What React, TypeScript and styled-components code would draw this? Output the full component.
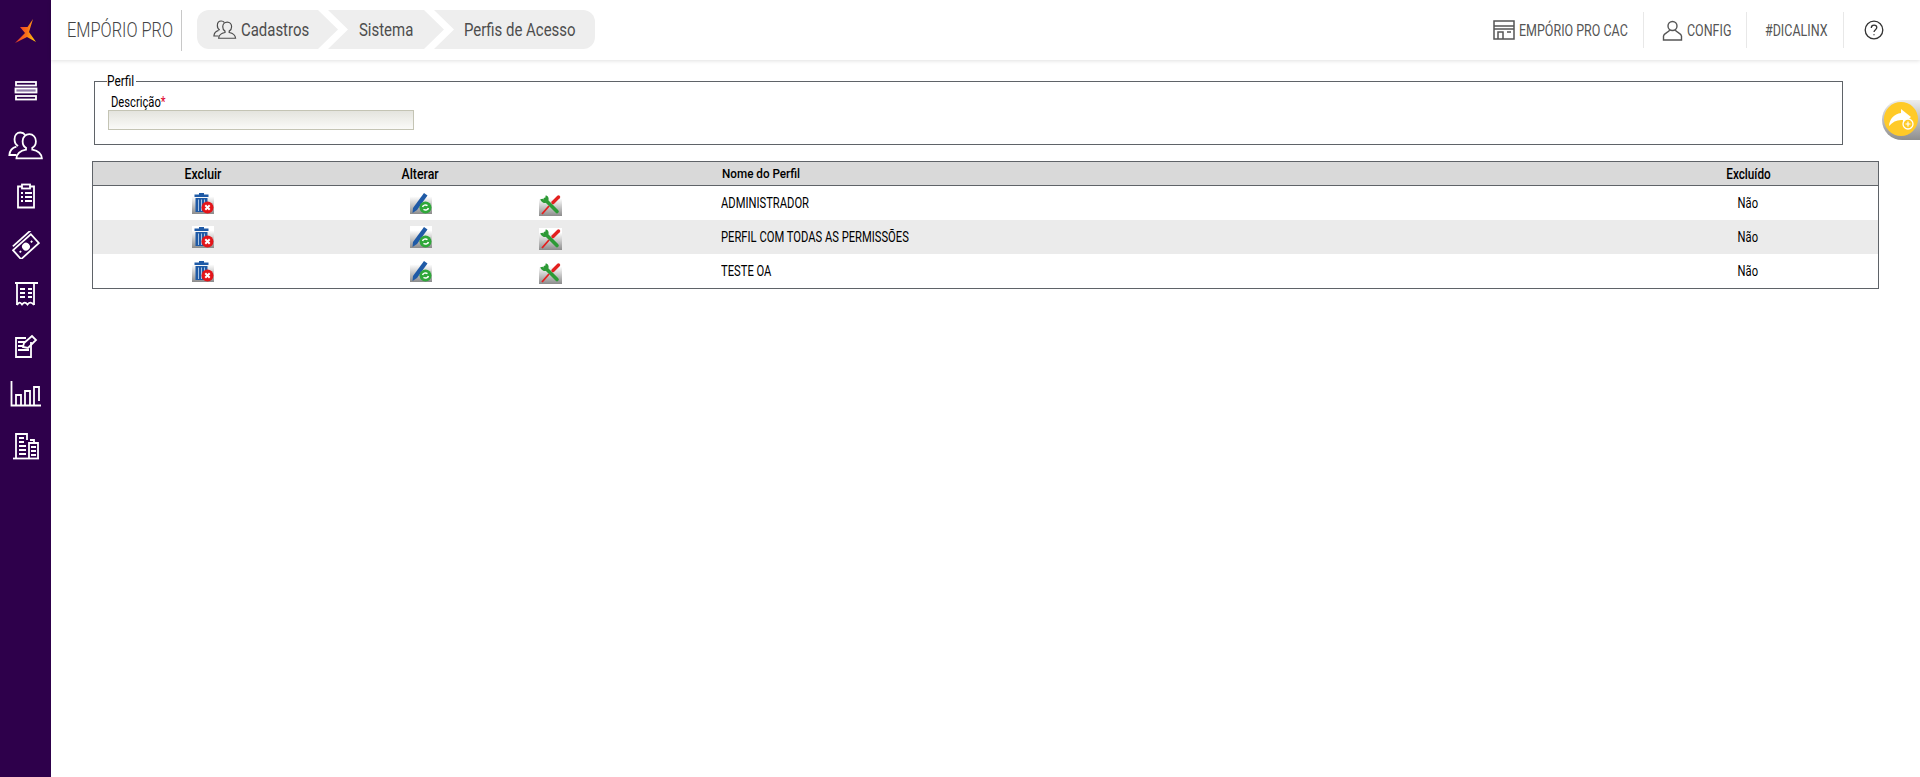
import styled, { createGlobalStyle } from 'styled-components';

const GlobalStyle = createGlobalStyle`
  html, body {
    margin: 0;
    height: 100%;
    background: #fff;
    font-family: 'Roboto', 'Liberation Sans', sans-serif;
  }
  * { box-sizing: border-box; }
  #root { height: 100%; }
`;

interface Perfil {
  id: number;
  nome: string;
  excluido: string;
}

const perfis: Perfil[] = [
  { id: 1, nome: 'ADMINISTRADOR', excluido: 'Não' },
  { id: 2, nome: 'PERFIL COM TODAS AS PERMISSÕES', excluido: 'Não' },
  { id: 3, nome: 'TESTE OA', excluido: 'Não' },
];

const UsersIcon = ({ size = 24 }: { size?: number }) => (
  <svg width={size} height={size} viewBox="0 0 32 32" fill="none" stroke="currentColor" strokeWidth="1.6">
    <path d="M9 16c-2-1-3.200-3.500-3.200-6C5.800 6.500 8 4 11 4c1.800 0 3.300.8 4.300 2.200" />
    <path d="M7.500 16.500C4 17.500 1.500 20 1.200 24h6.300" />
    <path d="M19 5.500c3.400 0 5.800 2.800 5.800 6.200 0 2.600-1.300 4.800-3.200 5.800v1.800c4.200.8 8 2.800 8.500 7.700H7.500c.4-4.800 4.300-6.900 8.500-7.700v-1.800c-2-1-3-3.200-3-5.800 0-3.400 2.600-6.200 6-6.200z" />
  </svg>
);

const MenuIcon = () => (
  <svg width="24" height="22" viewBox="0 0 24 22" fill="none" stroke="#fff" strokeWidth="1.800">
    <rect x="2" y="2" width="20" height="3.500" />
    <rect x="1.500" y="8.500" width="21" height="4" fill="#8f7aa8" />
    <rect x="2" y="16" width="20" height="3.500" />
  </svg>
);

const ClipboardIcon = () => (
  <svg width="22" height="26" viewBox="0 0 22 26" fill="none" stroke="#fff" strokeWidth="1.800">
    <path d="M7 3.500H3v21h16v-21h-4" />
    <rect x="7" y="1.500" width="8" height="4" />
    <path d="M6 10h2M10 10h7M6 14h2M10 14h7M6 18h2M10 18h7" />
  </svg>
);

const TicketIcon = () => (
  <svg width="28" height="28" viewBox="0 0 28 28" fill="none" stroke="#fff" strokeWidth="1.800">
    <g transform="rotate(-42 14 15)">
      <rect x="1.500" y="9.500" width="24" height="12" />
      <path d="M4 6.500h24" />
      <circle cx="13.500" cy="15.500" r="3" fill="#fff" />
      <path d="M5 15.500h2M20 15.500h2" />
    </g>
  </svg>
);

const ReceiptIcon = () => (
  <svg width="26" height="28" viewBox="0 0 26 28" fill="none" stroke="#fff" strokeWidth="1.800">
    <path d="M25 2H2M4 2v22M21 2v22" />
    <path d="M4 24c2-3 3-3 5-.5 2-2.500 3.500-2.500 5.500 0 2-2.500 4-2.500 6.500.5" />
    <path d="M7 8h5M15 8h4M7 12h5M15 12h4M7 16h5M15 16h4" />
  </svg>
);

const EditIcon = () => (
  <svg width="24" height="26" viewBox="0 0 24 26" fill="none" stroke="#fff" strokeWidth="1.800">
    <path d="M17 9v15H2V5h10" />
    <path d="M4 9h7M4 13h5M4 17h11" />
    <path d="m9 14 1-4 8-7 4 4-8 8z" />
  </svg>
);

const ChartIcon = () => (
  <svg width="32" height="26" viewBox="0 0 32 26" fill="none" stroke="#fff" strokeWidth="1.800">
    <path d="M1.500 0v24.500H31" />
    <path d="M6 24V14h5v10M15 24V10h5v14M24 24V6h5v14" />
  </svg>
);

const BuildingIcon = () => (
  <svg width="28" height="28" viewBox="0 0 28 28" fill="none" stroke="#fff" strokeWidth="1.800">
    <path d="M1 26.500h26" />
    <path d="M4 26V2h11v6M17 26V11h9v15" />
    <path d="M7 6h5M7 10h5M7 14h7M7 18h7M7 22h7M19 15h5M19 19h5M19 23h5" />
    <path d="M18 8h4v3" />
  </svg>
);

const LogoIcon = () => (
  <svg width="24" height="28" viewBox="14 18 24 28">
    <defs>
      <linearGradient id="logoFill" x1="0" y1="0.500" x2="1" y2="0.700">
        <stop offset="0" stopColor="#ef2f2d" />
        <stop offset="0.550" stopColor="#f9701a" />
        <stop offset="1" stopColor="#ffc90a" />
      </linearGradient>
    </defs>
    <path fill="url(#logoFill)" d="M33 19 27.500 27 20 27 25 33 15 43 27 37 36 42 29 32Z" />
  </svg>
);

const StoreIcon = () => (
  <svg width="22" height="20" viewBox="0 0 22 20" fill="none" stroke="#555" strokeWidth="1.500">
    <rect x="1" y="1" width="20" height="18" />
    <path d="M1 6h20M1 9h20" />
    <path d="M5 19V12h5v7M14 12h4" />
  </svg>
);

const UserIcon = () => (
  <svg width="21" height="21" viewBox="0 0 21 21" fill="none" stroke="#555" strokeWidth="1.400">
    <circle cx="10.500" cy="6" r="4.500" />
    <path d="M7.500 10c0 2-5.500 3-6 6v4h18v-4c-.5-3-6-4-6-6" />
  </svg>
);

const HelpIcon = () => (
  <svg width="20" height="20" viewBox="0 0 20 20" fill="none" stroke="#333" strokeWidth="1.300">
    <circle cx="10" cy="10" r="8.800" />
    <path d="M7.300 8c0-1.700 1.200-2.800 2.800-2.800s2.700 1 2.700 2.400c0 2-2.800 2.200-2.800 4.400" />
    <path d="M10 14.200v1" />
  </svg>
);

const TrashIcon = () => (
  <svg width="22" height="22" viewBox="0 0 22 22">
    <path fill="#1f5aa6" d="M7 1h5v1.500h4.500V5h-14V2.500H7zM3.500 6h12v14h-12z" />
    <path stroke="#a9c4e4" strokeWidth="1" d="M6.500 7.500V19M9.500 7.500V19M12.500 7.500V19" />
    <circle cx="15.500" cy="15.500" r="6" fill="#e3151a" />
    <path stroke="#fff" strokeWidth="2" d="m13.300 13.300 4.400 4.400M17.700 13.300l-4.400 4.400" />
  </svg>
);

const PencilIcon = () => (
  <svg width="22" height="22" viewBox="0 0 22 22">
    <path fill="#1f5aa6" d="M14 1 17.500 3.500 7 18 2.500 21 3 16z" />
    <circle cx="15.500" cy="15.500" r="6" fill="#2fa83a" />
    <path fill="none" stroke="#fff" strokeWidth="1.500" d="M12.600 15c.3-1.700 2.800-2.800 4.900-1.400M18.400 16c-.3 1.700-2.800 2.800-4.900 1.400" />
  </svg>
);

const ToolsIcon = () => (
  <svg width="23" height="22" viewBox="0 0 23 22">
    <path stroke="#2d9a36" strokeWidth="3.600" strokeLinecap="round" d="M6 5.500l12 12" />
    <path fill="none" stroke="#2d9a36" strokeWidth="2.600" d="M2.500 5c.5 2.500 3.500 3.500 5 2C9 5.500 8.500 3 6.500 2.500" />
    <path stroke="#e3201f" strokeWidth="3.400" strokeLinecap="round" d="M19.500 3 14 8.500" />
    <path stroke="#e3201f" strokeWidth="1.800" d="M10 12 3 20" />
  </svg>
);

const ShareIcon = () => (
  <svg width="28" height="24" viewBox="0 0 28 24">
    <path fill="#fff" d="M14 2l10 8-8 7v-4c-6-.5-10 1.500-14 6 .5-7 5-12 12-13z" />
    <circle cx="21" cy="17" r="5" fill="#ffca28" stroke="#fff" strokeWidth="1.300" />
    <path stroke="#fff" strokeWidth="1.200" d="M18.500 17h5M21 14.500v5" />
  </svg>
);

const sideIcons = [
  { icon: <MenuIcon />, nudge: 0 },
  { icon: <UsersIcon size={36} />, nudge: 4 },
  { icon: <ClipboardIcon />, nudge: 3 },
  { icon: <TicketIcon />, nudge: 1 },
  { icon: <ReceiptIcon />, nudge: 0 },
  { icon: <EditIcon />, nudge: 0 },
  { icon: <ChartIcon />, nudge: -3 },
  { icon: <BuildingIcon />, nudge: -2 },
];

export default function App() {
  return (
    <Page>
      <GlobalStyle />
      <Sidebar>
        <LogoSlot><LogoIcon /></LogoSlot>
        <SideNav>
          {sideIcons.map((item, i) => (
            <SideItem key={i} $nudge={item.nudge}>{item.icon}</SideItem>
          ))}
        </SideNav>
      </Sidebar>

      <Main>
        <Header>
          <Brand><Narrow $w={107} $sx={0.78}>EMPÓRIO PRO</Narrow></Brand>
          <Breadcrumb>
            <Crumb $kind="first"><UsersIcon size={24} /><Narrow $w={68} $sx={0.83}>Cadastros</Narrow></Crumb>
            <Crumb $kind="middle"><Narrow $w={54} $sx={0.83}>Sistema</Narrow></Crumb>
            <Crumb $kind="last"><Narrow $w={110} $sx={0.83}>Perfis de Acesso</Narrow></Crumb>
          </Breadcrumb>
          <HeaderLinks>
            <HeaderLink><StoreIcon /><Narrow $w={108} $sx={0.78}>EMPÓRIO PRO CAC</Narrow></HeaderLink>
            <HeaderLink><UserIcon /><Narrow $w={43} $sx={0.78}>CONFIG</Narrow></HeaderLink>
            <HeaderLink><Narrow $w={62} $sx={0.78}>#DICALINX</Narrow></HeaderLink>
            <HelpLink><HelpIcon /></HelpLink>
          </HeaderLinks>
        </Header>

        <Content>
          <FilterBox>
            <FilterLegend><Narrow $w={29} $sx={0.85}>Perfil</Narrow></FilterLegend>
            <FieldLabel><Narrow $w={46} $sx={0.8}>Descrição<Required>*</Required></Narrow></FieldLabel>
            <TextInput type="text" />
          </FilterBox>

          <Grid>
            <colgroup>
              <col width="220" />
              <col width="216" />
              <col width="44" />
              <col />
              <col width="260" />
            </colgroup>
            <thead>
              <tr>
                <HeadCell><CellText $sx={0.88}>Excluir</CellText></HeadCell>
                <HeadCell><CellText $sx={0.88}>Alterar</CellText></HeadCell>
                <HeadCell />
                <HeadCell $left><CellText $left $sx={0.9}>Nome do Perfil</CellText></HeadCell>
                <HeadCell><CellText $sx={0.84}>Excluído</CellText></HeadCell>
              </tr>
            </thead>
            <tbody>
              {perfis.map((perfil) => (
                <Row key={perfil.id}>
                  <Cell><IconButton><TrashIcon /></IconButton></Cell>
                  <Cell><IconButton><PencilIcon /></IconButton></Cell>
                  <Cell><IconButton $low><ToolsIcon /></IconButton></Cell>
                  <Cell $left><CellText $left>{perfil.nome}</CellText></Cell>
                  <Cell><CellText>{perfil.excluido}</CellText></Cell>
                </Row>
              ))}
            </tbody>
          </Grid>
        </Content>
      </Main>

      <FloatTab>
        <FloatCircle><ShareIcon /></FloatCircle>
      </FloatTab>
    </Page>
  );
}

// no condensed family is installed, so the narrow lettering is squeezed horizontally
const Narrow = styled.span<{ $w: number; $sx: number }>`
  display: inline-block;
  width: ${(p) => p.$w}px;
  white-space: nowrap;
  transform: scaleX(${(p) => p.$sx});
  transform-origin: left center;
`;

const CellText = styled.span<{ $left?: boolean; $sx?: number }>`
  display: inline-block;
  white-space: nowrap;
  transform: scaleX(${(p) => p.$sx ?? 0.8});
  transform-origin: ${(p) => (p.$left ? 'left center' : 'center')};
`;

const Page = styled.div`
  display: flex;
  min-height: 100%;
`;

const Sidebar = styled.aside`
  width: 51px;
  flex-shrink: 0;
  min-height: 777px;
  background: #2e004b;
  color: #fff;
  display: flex;
  flex-direction: column;
  align-items: center;
`;

const LogoSlot = styled.div`
  height: 64px;
  display: flex;
  align-items: center;
  justify-content: center;
`;

const SideNav = styled.nav`
  display: flex;
  flex-direction: column;
  align-items: center;
  padding-top: 1px;
`;

const SideItem = styled.div<{ $nudge: number }>`
  height: 51px;
  width: 51px;
  display: flex;
  align-items: center;
  justify-content: center;
  padding-top: ${(p) => Math.max(p.$nudge, 0) * 2}px;
  padding-bottom: ${(p) => Math.max(-p.$nudge, 0) * 2}px;
`;

const Main = styled.main`
  flex: 1;
  min-width: 0;
`;

const Header = styled.header`
  height: 60px;
  display: flex;
  align-items: flex-start;
  background: #fff;
  box-shadow: 0 1px 4px rgba(0, 0, 0, 0.12);
  padding-left: 16px;
`;

const Brand = styled.div`
  height: 41px;
  margin-top: 10px;
  width: 115px;
  border-right: 1px solid #c8c8c8;
  font-size: 21px;
  font-weight: 300;
  line-height: 41px;
  color: #444;
`;

const crumbShapes = {
  first: 'polygon(0 0, calc(100% - 20px) 0, 100% 50%, calc(100% - 20px) 100%, 0 100%)',
  middle: 'polygon(0 0, calc(100% - 20px) 0, 100% 50%, calc(100% - 20px) 100%, 0 100%, 20px 50%)',
  last: 'polygon(0 0, 100% 0, 100% 100%, 0 100%, 20px 50%)',
};

const crumbPadding = {
  first: '0 29px 0 16px',
  middle: '0 31px',
  last: '0 21px 0 30px',
};

const Breadcrumb = styled.div`
  display: flex;
  margin: 10px 0 0 15px;
`;

const Crumb = styled.div<{ $kind: 'first' | 'middle' | 'last' }>`
  height: 39px;
  display: flex;
  align-items: center;
  gap: 4px;
  padding: ${(p) => crumbPadding[p.$kind]};
  margin-left: ${(p) => (p.$kind === 'first' ? 0 : '-10px')};
  background: #eeeeee;
  color: #4d4d4d;
  font-size: 18px;
  clip-path: ${(p) => crumbShapes[p.$kind]};
  border-radius: ${(p) =>
    p.$kind === 'first' ? '12px 0 0 12px' : p.$kind === 'last' ? '0 12px 12px 0' : '0'};
`;

const HeaderLinks = styled.div`
  margin-left: auto;
  margin-top: 10px;
  display: flex;
  align-items: center;
  height: 40px;
  padding-right: 36px;
`;

const HeaderLink = styled.div`
  display: flex;
  align-items: center;
  gap: 4px;
  height: 36px;
  padding: 0 16px 0 18px;
  border-right: 1px solid #e8e8e8;
  font-size: 16px;
  color: #555;
`;

const HelpLink = styled(HeaderLink)`
  border-right: 0;
  padding: 0 0 0 20px;
`;

const Content = styled.div`
  padding: 14px 41px 0 41px;
`;

const FilterBox = styled.fieldset`
  margin: 0 36px 0 2px;
  padding: 0 14px;
  height: 71px;
  border: 1px solid #5f6368;
`;

const FilterLegend = styled.legend`
  padding: 0;
  margin-left: -2px;
  font-size: 14px;
  line-height: 14px;
  color: #000;
`;

const FieldLabel = styled.div`
  font-size: 14px;
  line-height: 15px;
  color: #000;
  padding-left: 2px;
  margin-top: 7px;
`;

const Required = styled.span`
  color: #e0002b;
`;

const TextInput = styled.input`
  display: block;
  width: 306px;
  height: 20px;
  padding: 0;
  margin-left: -1px;
  border: 1px solid #c4c4b4;
  background: linear-gradient(#e4e4de, #fafaf8);
  outline: none;
`;

const Grid = styled.table`
  width: 100%;
  margin-top: 16px;
  border-collapse: collapse;
  border: 1px solid #5f6368;
  table-layout: fixed;
  font-size: 14px;
  color: #000;
`;

const HeadCell = styled.th<{ $left?: boolean }>`
  height: 24px;
  padding: 0 0 0 ${(p) => (p.$left ? '149px' : '0')};
  background: #d9d9d9;
  border-bottom: 1px solid #5f6368;
  font-weight: 500;
  font-size: ${(p) => (p.$left ? '13px' : '14px')};
  text-align: ${(p) => (p.$left ? 'left' : 'center')};
`;

const Row = styled.tr`
  &:nth-child(even) {
    background: #ebebeb;
  }
`;

const Cell = styled.td<{ $left?: boolean }>`
  height: 34.4px;
  padding: 0 0 0 ${(p) => (p.$left ? '148px' : '0')};
  text-align: ${(p) => (p.$left ? 'left' : 'center')};
`;

const IconButton = styled.span<{ $low?: boolean }>`
  display: inline-flex;
  vertical-align: middle;
  margin-top: ${(p) => (p.$low ? '4px' : '0')};
  background: linear-gradient(#ffffff 20%, #8c8c8c);
`;

const FloatTab = styled.div`
  position: fixed;
  top: 100px;
  right: 0;
  width: 38px;
  height: 40px;
  padding: 2px 0 0 2px;
  border-radius: 20px 0 0 20px;
  background: linear-gradient(#eeeeee, #8e8e8e);
`;

const FloatCircle = styled.div`
  width: 34px;
  height: 34px;
  border-radius: 50%;
  background: #ffca28;
  display: flex;
  align-items: center;
  justify-content: center;
`;
